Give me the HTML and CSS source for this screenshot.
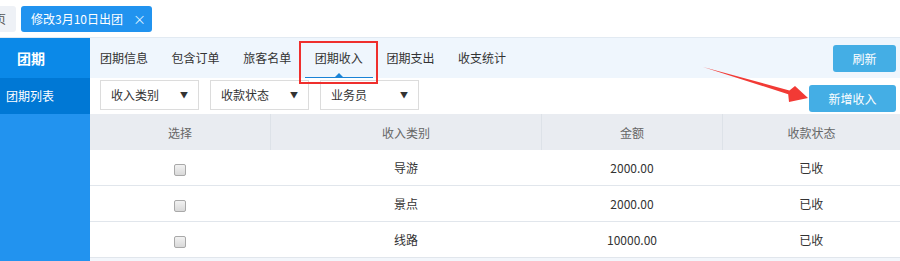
FILE: index.html
```html
<!DOCTYPE html>
<html lang="zh">
<head>
    <meta charset="UTF-8">
    <title>团期收入</title>
    <link rel="stylesheet" href="styles.css">
</head>
<body>

<!-- Top tabs -->
<div class="topbar">
    <div class="page-tab">页</div>
    <div class="page-tab active">修改3月10日出团<span class="close">×</span></div>
</div>

<div class="main">
    <!-- Sidebar -->
    <div class="sidebar">
        <div class="side-title">团期</div>
        <div class="side-item">团期列表</div>
    </div>

    <!-- Content -->
    <div class="content">
        <div class="nav">
            <div class="nav-tabs">
                <span class="nav-tab">团期信息</span>
                <span class="nav-tab">包含订单</span>
                <span class="nav-tab">旅客名单</span>
                <span class="nav-tab current">团期收入<i class="mark"></i></span>
                <span class="nav-tab">团期支出</span>
                <span class="nav-tab">收支统计</span>
            </div>
            <button class="btn">刷新</button>
        </div>

        <div class="filters">
            <div class="select">收入类别<span class="caret">▼</span></div>
            <div class="select">收款状态<span class="caret">▼</span></div>
            <div class="select">业务员<span class="caret">▼</span></div>
            <button class="btn btn-add">新增收入</button>
        </div>

        <table class="grid">
            <thead>
                <tr>
                    <th class="col-check">选择</th>
                    <th class="col-type">收入类别</th>
                    <th class="col-money">金额</th>
                    <th>收款状态</th>
                </tr>
            </thead>
            <tbody>
                <tr>
                    <td><input type="checkbox"></td>
                    <td>导游</td>
                    <td>2000.00</td>
                    <td>已收</td>
                </tr>
                <tr>
                    <td><input type="checkbox"></td>
                    <td>景点</td>
                    <td>2000.00</td>
                    <td>已收</td>
                </tr>
                <tr>
                    <td><input type="checkbox"></td>
                    <td>线路</td>
                    <td>10000.00</td>
                    <td>已收</td>
                </tr>
                <tr class="empty"><td colspan="4"></td></tr>
            </tbody>
        </table>
    </div>
</div>

<!-- annotation arrow -->
<svg class="arrow" width="900" height="261" viewBox="0 0 900 261">
    <polygon points="703,67 789.4,90.4 795,86 808,98 789,102 788.2,94.2" fill="#f23a35"/>
</svg>

</body>
</html>
```

FILE: styles.css
```css
html, body {
    overflow: hidden;
}
body {
    margin: 0;
    font-family: "Noto Sans CJK SC", "Liberation Sans", sans-serif;
    font-size: 12px;
    color: #333;
    background-color: #fff;
    position: relative;
    width: 900px;
    height: 261px;
}
.topbar {
    height: 37px;
    border-bottom: 1px solid #e2eaf2;
    display: flex;
    align-items: center;
    gap: 5px;
    margin-left: -16px;
}
.page-tab {
    height: 26px;
    line-height: 26px;
    padding: 0 10px;
    border-radius: 3px;
    background-color: #eef1f6;
    color: #555;
    margin-top: 1px;
}
.page-tab.active {
    background-color: #2193ef;
    color: #fff;
    padding: 0 6px 0 10px;
}
.page-tab .close {
    margin-left: 10px;
    font-size: 13px;
    color: #dcefff;
}
.main {
    display: flex;
    height: 223px;
    overflow: hidden;
}
.sidebar {
    width: 90px;
    background-color: #2293ef;
    color: #fff;
    flex-shrink: 0;
}
.side-title {
    height: 40px;
    line-height: 40px;
    padding-left: 17px;
    font-size: 14px;
    font-weight: bold;
    background-color: #0b89e8;
}
.side-item {
    height: 36px;
    line-height: 36px;
    padding-left: 6px;
    background-color: #0078d5;
}
.content {
    flex: 1;
}
.nav {
    height: 40px;
    background-color: #eff6fd;
    display: flex;
    align-items: center;
    justify-content: space-between;
    padding-right: 4px;
}
.nav-tabs {
    display: flex;
    gap: 3.6px;
    height: 40px;
}
.nav-tab {
    padding: 0 10px;
    line-height: 40px;
    position: relative;
}
.nav-tab.current {
    border-bottom: 1px solid #1a83d6;
    height: 39px;
}
.nav-tab.current::before {
    content: "";
    position: absolute;
    left: -6px;
    right: -5px;
    top: 3px;
    bottom: -7px;
    border: 2px solid #ef2f2d;
}
.nav-tab .mark {
    position: absolute;
    left: 50%;
    bottom: 0;
    margin-left: -4px;
    border-left: 4px solid transparent;
    border-right: 4px solid transparent;
    border-bottom: 4px solid #1a83d6;
}
.btn {
    background-color: #44aee5;
    color: #fff;
    border: none;
    border-radius: 3px;
    font-family: inherit;
    font-size: 12px;
    width: 63px;
    height: 27px;
    padding: 0;
}
.filters {
    height: 36px;
    display: flex;
    align-items: center;
    gap: 11px;
    padding-left: 10px;
    padding-right: 4px;
}
.select {
    width: 77px;
    height: 28px;
    line-height: 28px;
    border: 1px solid #dcdcdc;
    padding: 0 10px;
    display: flex;
    justify-content: space-between;
    color: #333;
    margin-top: -2px;
}
.caret {
    font-size: 8px;
    color: #333;
}
.btn-add {
    margin-left: auto;
    width: 87px;
    margin-top: 5px;
}
.grid {
    width: 100%;
    border-collapse: collapse;
}
.grid th {
    height: 36px;
    background-color: #e9ecf1;
    font-weight: normal;
    color: #666;
    border-left: 1px solid #dde2e8;
    padding: 0;
}
.grid th:first-child {
    border-left: none;
}
.col-check { width: 180px; }
.col-type { width: 270px; }
.col-money { width: 180px; }
.grid td {
    height: 35px;
    text-align: center;
    border-bottom: 1px solid #e1e6ec;
    padding: 0;
    color: #333;
}
.grid input[type="checkbox"] {
    appearance: none;
    width: 12px;
    height: 12px;
    margin: 0;
    vertical-align: middle;
    border: 1px solid #a9a9a9;
    border-radius: 2px;
    background: linear-gradient(#f2f2f2, #d9d9d9);
}
.grid .empty td {
    background-color: #f2f6fb;
}
.arrow {
    position: absolute;
    left: 0;
    top: 0;
    pointer-events: none;
}
```
